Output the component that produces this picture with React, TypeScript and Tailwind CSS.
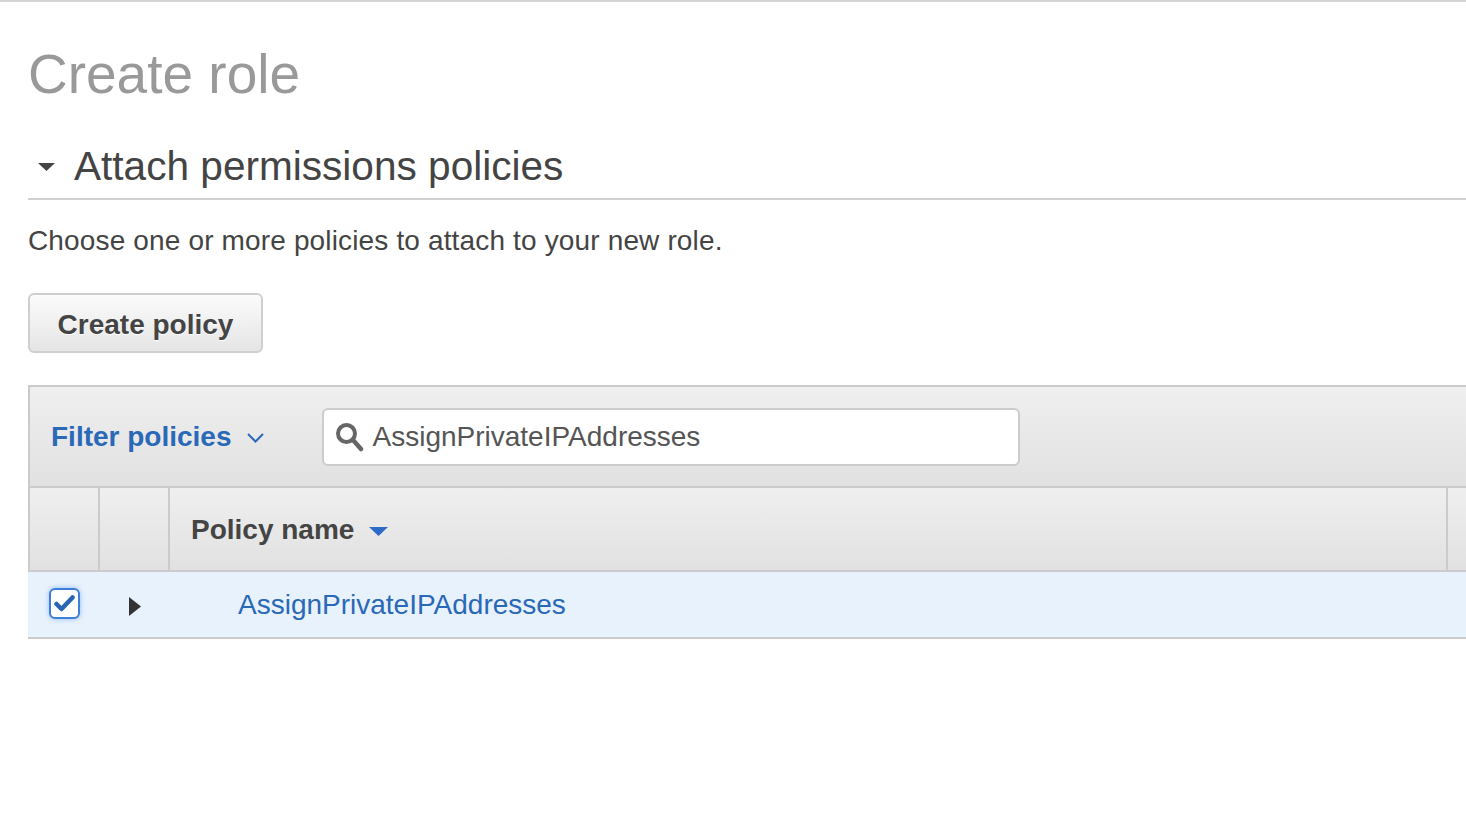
import React from 'react';

const font = { fontFamily: '"Liberation Sans", Arial, sans-serif' };

const SortDown: React.FC<{ w: number; h: number; color: string }> = ({ w, h, color }) => (
  <svg width={w} height={h} viewBox={`0 0 ${w} ${h}`}>
    <polygon points={`0,0 ${w},0 ${w / 2},${h}`} fill={color} />
  </svg>
);

const App: React.FC = () => {
  return (
    <div className="w-[1466px] h-[826px] overflow-hidden bg-white border-t-2 border-[#d6d6d6]" style={font}>
      <div className="pl-[28px]">
        {/* Page title */}
        <h1 className="mt-[45px] text-[55px] leading-[55px] text-[#999999]">Create role</h1>

        {/* Section header */}
        <div className="mt-[44px] flex items-center h-[40px]">
          <div className="ml-[10px] mr-[19px] mt-[2px]">
            <SortDown w={17} h={8} color="#444444" />
          </div>
          <h2 className="text-[40.6px] leading-[40px] text-[#444444]">Attach permissions policies</h2>
        </div>
        <div className="mt-[12px] h-[2px] bg-[#d0d0d0]" />

        <p className="mt-[27px] text-[28px] leading-[28px] tracking-[0.15px] text-[#444444]">
          Choose one or more policies to attach to your new role.
        </p>

        <button className="mt-[38px] w-[235px] h-[60px] pt-[3px] rounded-[6px] border-2 border-[#cfcfcf] bg-linear-to-b from-[#fbfbfb] to-[#e5e5e5] text-[28px] font-bold text-[#444444] [text-shadow:0_1px_0_#ffffff]">
          Create policy
        </button>

        {/* Policies table */}
        <div className="mt-[32px] w-[1480px] border-t-2 border-[#cbcbcb]">
          <div className="h-[101px] flex items-center border-l-2 border-b-2 border-[#cbcbcb] bg-linear-to-b from-[#efefef] to-[#e1e1e1]">
            <span className="ml-[21px] text-[28px] font-bold text-[#2a68b8]">Filter policies</span>
            <svg className="ml-[15px] mt-[3px]" width="17" height="10" viewBox="0 0 17 10">
              <polyline points="1,1 8.5,8.5 16,1" fill="none" stroke="#2a68b8" strokeWidth="2" />
            </svg>
            <div className="ml-[58px] w-[698px] h-[58px] flex items-center rounded-[6px] border-2 border-[#cccccc] bg-white">
              <svg className="ml-[11px]" width="30" height="30" viewBox="0 0 30 30">
                <circle cx="11.5" cy="11.5" r="8.5" fill="none" stroke="#666666" strokeWidth="4" />
                <line x1="18" y1="18" x2="26" y2="27" stroke="#666666" strokeWidth="4.5" strokeLinecap="round" />
              </svg>
              <span className="ml-[8px] text-[28px] text-[#555555]">AssignPrivateIPAddresses</span>
            </div>
          </div>

          <div className="h-[84px] flex border-l-2 border-b-2 border-[#cbcbcb] bg-linear-to-b from-[#efefef] to-[#e1e1e1]">
            <div className="w-[70px] border-r-2 border-[#cbcbcb]" />
            <div className="w-[70px] border-r-2 border-[#cbcbcb]" />
            <div className="w-[1278px] flex items-center border-r-2 border-[#cbcbcb]">
              <span className="ml-[21px] mt-[2px] text-[28px] font-bold text-[#444444]">Policy name</span>
              <div className="ml-[15px] mt-[4px]">
                <SortDown w={19} h={9} color="#2e6bc6" />
              </div>
            </div>
            <div className="flex-1" />
          </div>

          <div className="h-[67px] flex items-center border-b-2 border-[#cbcbcb] bg-[#e8f2fd]">
            <div className="w-[72px] flex justify-center">
              <div className="mt-[-3px] w-[31px] h-[31px] rounded-[6px] border-2 border-[#3f7fd8] bg-white flex items-center justify-center shadow-[0_0_5px_rgba(70,140,230,0.55)]">
                <svg width="21" height="17" viewBox="0 0 21 17">
                  <polyline points="2.5,9 7.5,14 18.5,2.5" fill="none" stroke="#2a64b4" strokeWidth="4.5" strokeLinecap="round" strokeLinejoin="round" />
                </svg>
              </div>
            </div>
            <div className="w-[70px] flex justify-center">
              <svg className="mt-[4px]" width="12" height="19" viewBox="0 0 12 19">
                <polygon points="0,0 12,9.5 0,19" fill="#333333" />
              </svg>
            </div>
            <span className="ml-[68px] mt-[1px] text-[28px] text-[#2a68b8]">AssignPrivateIPAddresses</span>
          </div>
        </div>
      </div>
    </div>
  );
};

export default App;
